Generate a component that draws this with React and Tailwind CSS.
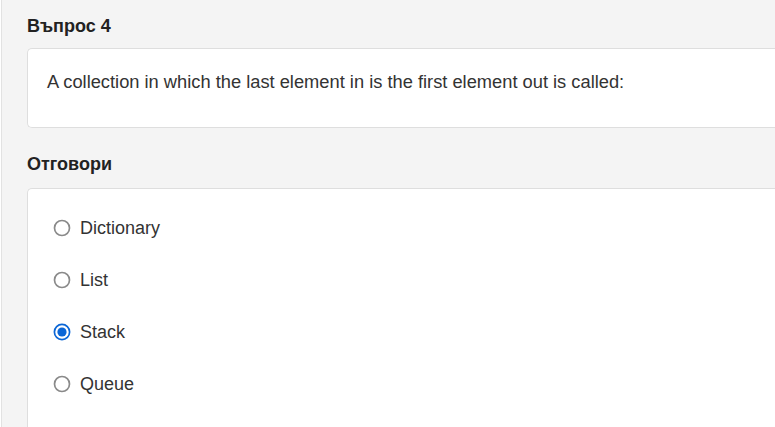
// Question view
const answers = [
	{ id: 'a1', label: 'Dictionary' },
	{ id: 'a2', label: 'List' },
	{ id: 'a3', label: 'Stack', checked: true },
	{ id: 'a4', label: 'Queue' },
];

function Radio({ checked }) {
	return (
		<svg width="18" height="18" viewBox="0 0 18 18" className="shrink-0">
			{checked ? (
				<>
					<circle cx="9" cy="9" r="7.6" fill="white" stroke="#0b66d6" strokeWidth="1.7" />
					<circle cx="9" cy="9" r="4.6" fill="#0b66d6" />
				</>
			) : (
				<circle cx="9" cy="9" r="7.5" fill="white" stroke="#8a8a8a" strokeWidth="1.7" />
			)}
		</svg>
	);
}

export default function App() {
	return (
		<div className="h-[427px] w-[775px] overflow-hidden bg-white" style={{ fontFamily: '"Liberation Sans", Arial, sans-serif' }}>
			<div className="ml-px h-full border-l border-[#e2e2e2] bg-[#f4f4f4] pl-[25px] pt-[16px] text-[#333]">

				{/* QUESTION */}
				<h2 className="mb-[12px] text-[18px] font-bold leading-[20px] text-[#222]">Въпрос 4</h2>
				<div className="h-[80px] rounded-l-[5px] border border-r-0 border-[#dedede] bg-white pl-[19px] pt-[22px]">
					<p className="text-[18.3px] leading-[22px]">A collection in which the last element in is the first element out is called:</p>
				</div>

				{/* ANSWERS */}
				<h2 className="mb-[14px] mt-[26px] text-[18px] font-bold leading-[20px] text-[#222]">Отговори</h2>
				<div className="h-[260px] rounded-tl-[5px] border-l border-t border-[#dedede] bg-white pl-[25px] pt-[28px]">
					<div className="flex flex-col gap-[30px]">
						{answers.map(a => (
							<label key={a.id} className="flex h-[22px] items-center gap-[9px] text-[18px] leading-[22px]">
								<Radio checked={a.checked} />
								<span>{a.label}</span>
							</label>
						))}
					</div>
				</div>
			</div>
		</div>
	);
}
